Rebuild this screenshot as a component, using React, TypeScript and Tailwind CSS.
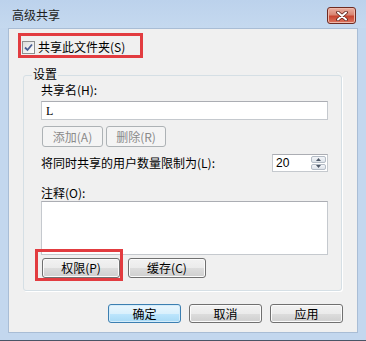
import { ReactNode } from 'react';

const btnBase = 'h-full flex items-center justify-center rounded-[3px] border text-[12px] leading-[14px]';
const btnNormal = `${btnBase} border-[#707070] text-black bg-[linear-gradient(#f2f2f2,#ebebeb_50%,#dddddd_50%,#cfcfcf)] shadow-[inset_0_0_0_1px_#fbfbfb]`;
const btnDefault = `${btnBase} border-[#3c7fb1] text-black bg-[linear-gradient(#eaf6fd,#d9f0fc_50%,#bee6fd_50%,#a7d9f5)] shadow-[inset_0_0_0_1px_#d4ecfa]`;
const btnDisabled = `${btnBase} border-[#adb2b5] text-[#8a8a8a] bg-[#f4f4f4]`;

function Button({ className, children }: { className: string, children: ReactNode }) {
  return (
    <button type="button" className={className}>
      {children}
    </button>
  );
}

function CloseButton() {
  return (
    <div className="w-[29px] h-[17px] rounded-[3px] border border-[#6e2b22] bg-[linear-gradient(#eab0a3,#d98572_45%,#c8442f_55%,#dc7560)] shadow-[inset_0_0_0_1px_#efb9ab] flex items-center justify-center">
      <svg width="12" height="10" viewBox="0 0 12 10">
        <path d="M2 1.5 L10 8.5 M10 1.5 L2 8.5" stroke="#5a2018" strokeWidth="3.6" strokeLinecap="round" />
        <path d="M2 1.5 L10 8.5 M10 1.5 L2 8.5" stroke="#ffffff" strokeWidth="2" strokeLinecap="round" />
      </svg>
    </div>
  );
}

function Checkbox() {
  return (
    <div className="w-[13px] h-[13px] border border-[#8e8f8f] bg-[linear-gradient(135deg,#dcdcdc,#ffffff)] flex items-center justify-center shrink-0">
      <svg width="9" height="9" viewBox="0 0 9 9">
        <path d="M1 4.5 L3.5 7 L8 1.5" stroke="#4a5f93" strokeWidth="1.8" fill="none" />
      </svg>
    </div>
  );
}

function Spinner() {
  return (
    <div className="w-[56px] h-[18px] flex border border-[#c5c9ce] border-t-[#abadb3] bg-white">
      <div className="flex-1 flex items-center pl-[3px] text-[12px] leading-[14px] font-['Liberation_Sans',sans-serif]">20</div>
      <div className="w-[17px] flex flex-col gap-[1px] p-[1px]">
        <div className="flex-1 rounded-[2px] border border-[#b4bcc6] bg-[linear-gradient(#f3f5f8,#dde3ea)] flex items-center justify-center">
          <svg width="5" height="3" viewBox="0 0 5 3"><path d="M0 3 L2.5 0 L5 3Z" fill="#4d5868" /></svg>
        </div>
        <div className="flex-1 rounded-[2px] border border-[#b4bcc6] bg-[linear-gradient(#f3f5f8,#dde3ea)] flex items-center justify-center">
          <svg width="5" height="3" viewBox="0 0 5 3"><path d="M0 0 L2.5 3 L5 0Z" fill="#4d5868" /></svg>
        </div>
      </div>
    </div>
  );
}

export default function App() {
  return (
    <div className="relative w-[366px] h-[341px] flex flex-col bg-[#c3d7ee] font-['Noto_Sans_CJK_SC','Liberation_Sans',sans-serif] text-black select-none">
      {/* title bar */}
      <div className="h-[28px] flex items-center justify-between pl-[12px] pr-[10px] bg-[linear-gradient(#bcd2ec,#c5d9ef)]">
        <span className="text-[12px] leading-[14px] mt-[2px] text-[#1e1e1e]">高级共享</span>
        <div className="self-start mt-[7px]">
          <CloseButton />
        </div>
      </div>

      {/* client area */}
      <div className="h-[305px] mx-[8px] bg-[#f0f0f0] border border-[#a9bdd5] flex flex-col">
        <div className="flex items-center gap-[3px] h-[14px] mt-[11px] ml-[13px]">
          <Checkbox />
          <span className="text-[12px] leading-[14px]">共享此文件夹(S)</span>
        </div>

        <div className="relative mt-[21px] ml-[14px] mr-[15px] h-[216px] border border-[#d5dfe5] rounded-[3px] shadow-[1px_1px_0_#ffffff] flex flex-col pl-[17px] pr-[13px]">
          <span className="absolute left-[8px] -top-[9px] text-[12px] leading-[14px] bg-[#f0f0f0] px-[1px]">设置</span>

          <span className="mt-[7px] text-[12px] leading-[14px]">共享名(H):</span>
          <div className="mt-[4px] h-[19px] border border-[#c5c9ce] border-t-[#abadb3] bg-white flex items-center pl-[4px] text-[12px] leading-[14px] font-['Liberation_Serif',serif]">L</div>

          <div className="mt-[6px] h-[21px] flex gap-[3px] ml-[1px]">
            <div className="w-[61px]"><Button className={`${btnDisabled} w-full`}>添加(A)</Button></div>
            <div className="w-[60px]"><Button className={`${btnDisabled} w-full`}>删除(R)</Button></div>
          </div>

          <div className="mt-[7px] h-[18px] flex items-center justify-between">
            <span className="text-[12px] leading-[14px]">将同时共享的用户数量限制为(L):</span>
            <Spinner />
          </div>

          <span className="mt-[14px] text-[12px] leading-[14px]">注释(O):</span>
          <div className="mt-[1px] h-[54px] border border-[#c5c9ce] border-t-[#abadb3] bg-white" />

          <div className="mt-[3px] h-[20px] flex gap-[8px] ml-[1px]">
            <div className="w-[78px]"><Button className={`${btnNormal} w-full`}>权限(P)</Button></div>
            <div className="w-[78px]"><Button className={`${btnNormal} w-full`}>缓存(C)</Button></div>
          </div>
        </div>

        <div className="mt-[13px] h-[19px] flex justify-end gap-[8px] pr-[14px]">
          <div className="w-[73px]"><Button className={`${btnDefault} w-full`}>确定</Button></div>
          <div className="w-[73px]"><Button className={`${btnNormal} w-full`}>取消</Button></div>
          <div className="w-[73px]"><Button className={`${btnNormal} w-full`}>应用</Button></div>
        </div>
      </div>

      <div className="flex-1 border-b border-[#4a5566]" />

      {/* red highlight annotations */}
      <div className="absolute left-[18px] top-[33px] w-[125px] h-[25px] border-[3px] border-[#e23c40] pointer-events-none" />
      <div className="absolute left-[35px] top-[249px] w-[88px] h-[32px] border-[3px] border-[#e23c40] pointer-events-none" />
    </div>
  );
}
